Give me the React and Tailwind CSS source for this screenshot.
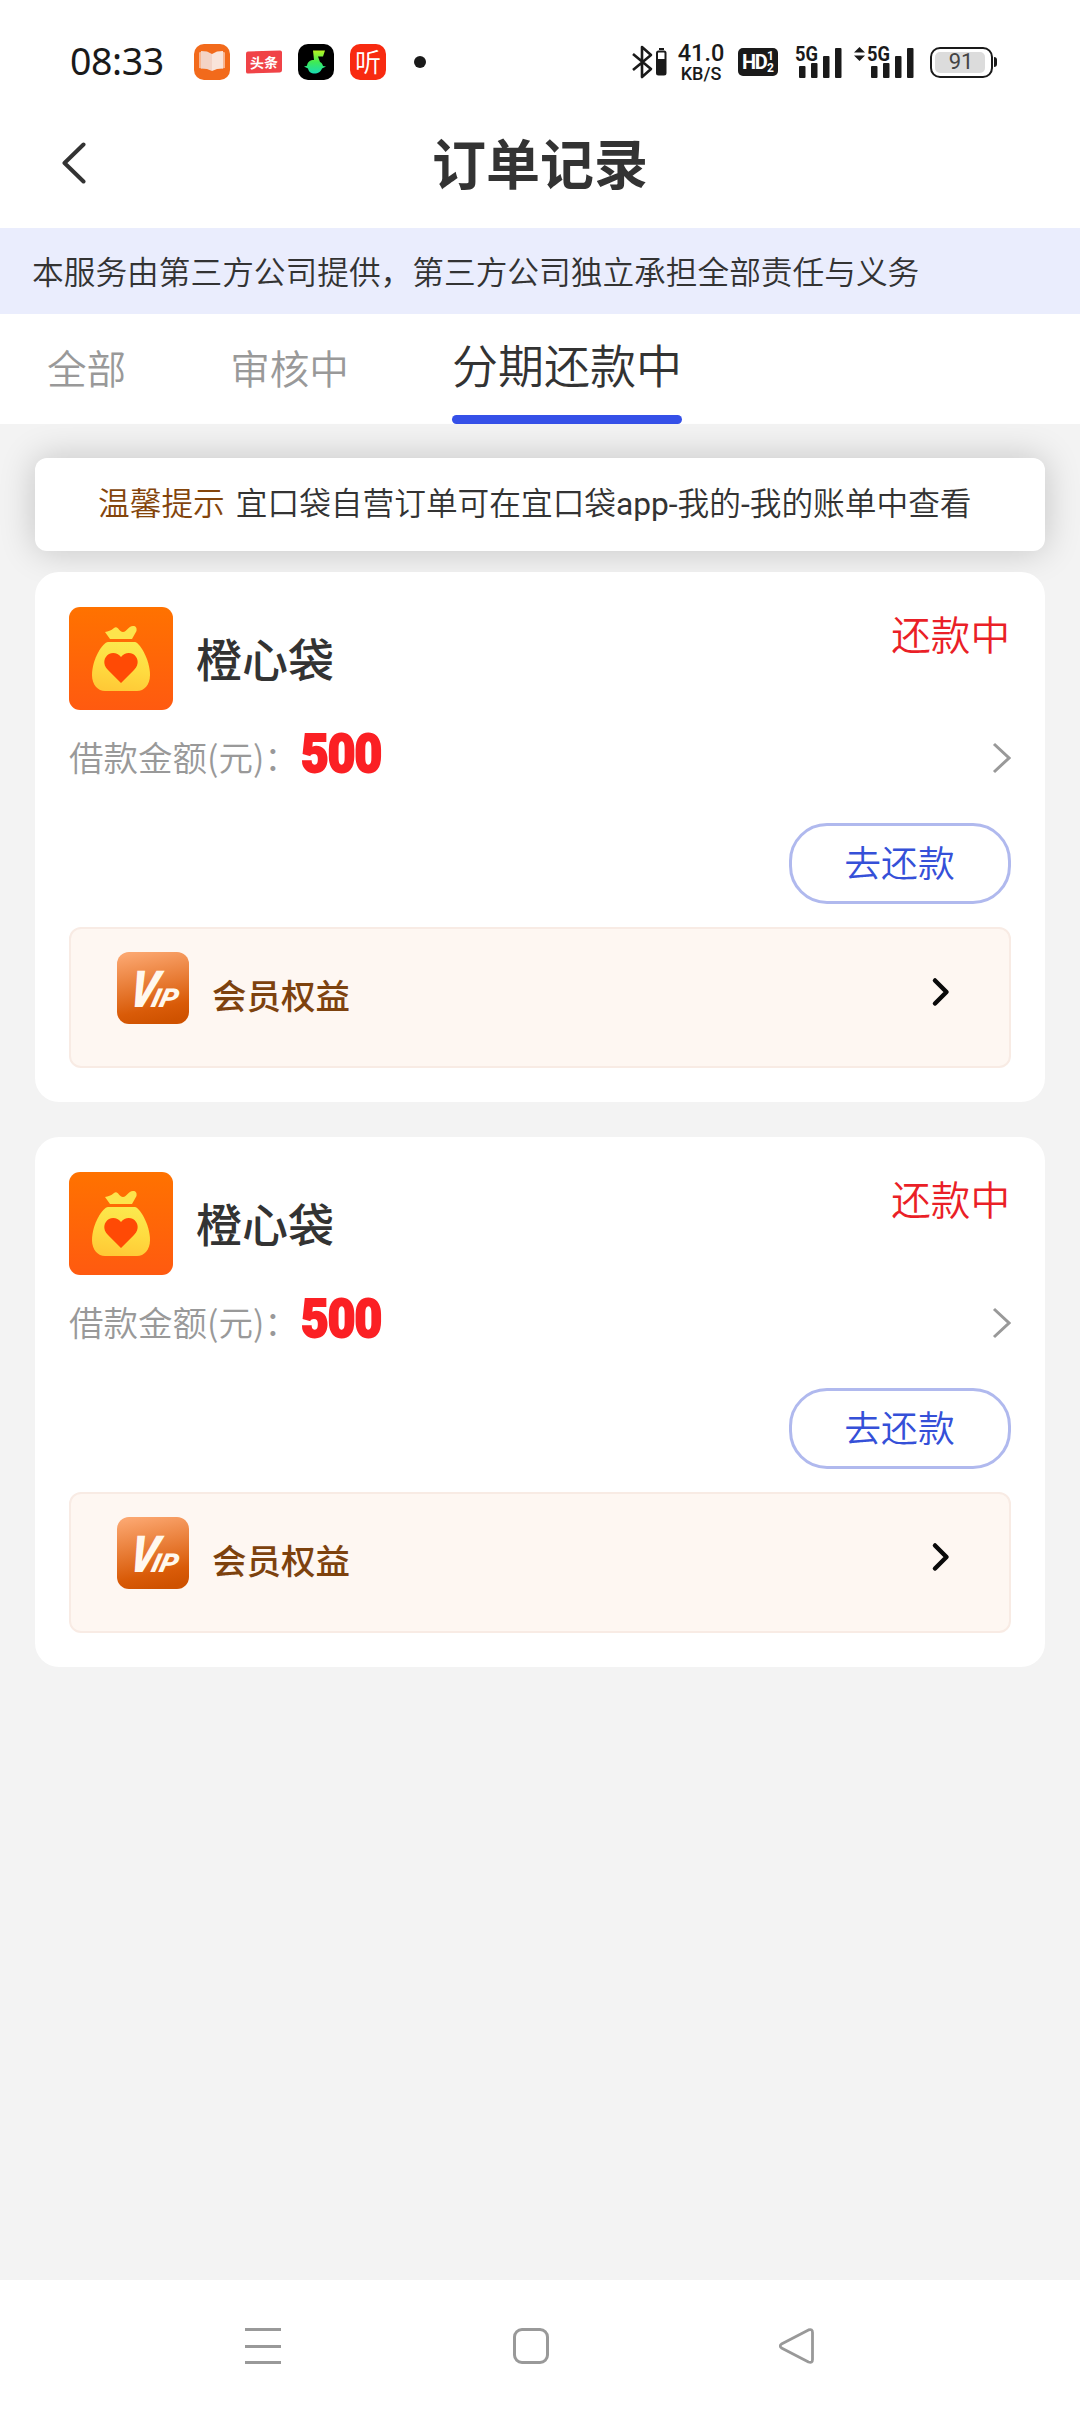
import clsx from 'clsx';

const tabs = [
  { id: 'all', label: '全部' },
  { id: 'review', label: '审核中' },
  { id: 'repaying', label: '分期还款中' },
];

const orders = [
  { id: 1, name: '橙心袋', amount: 500, status: '还款中' },
  { id: 2, name: '橙心袋', amount: 500, status: '还款中' },
];

export default function App() {
  return (
    <div className="flex flex-col w-[1080px] h-[2412px] overflow-hidden bg-[#f3f3f3] text-[#333333] font-['Noto_Sans_CJK_SC',sans-serif] font-[350] whitespace-nowrap">
      <StatusBar />
      <Header title="订单记录" />

      <div className="flex items-center h-[86px] pl-[32px] bg-[#eaedfd] text-[31.7px] leading-none shrink-0">
        本服务由第三方公司提供，第三方公司独立承担全部责任与义务
      </div>

      <Tabs active="repaying" />

      <main className="flex-1 px-[35px] pt-[34px]">
        <div className="flex items-center h-[93px] pl-[63px] mb-[21px] rounded-[12px] bg-white text-[31.7px] leading-none shadow-[0_0_36px_rgba(0,0,0,0.2)] font-['Roboto','Noto_Sans_CJK_SC',sans-serif]">
          <span className="text-[#84450b]">温馨提示</span>
          <span className="ml-[11px]">
            宜口袋自营订单可在宜口袋<span className="font-normal">app-</span>我的<span className="font-normal">-</span>我的账单中查看
          </span>
        </div>

        <div className="relative flex flex-col gap-[35px]">
          {orders.map((order) => (
            <OrderCard key={order.id} order={order} />
          ))}
        </div>
      </main>

      <NavBar />
    </div>
  );
}

function StatusBar() {
  return (
    <div className="flex items-center justify-between h-[124px] pl-[70px] pr-[83px] bg-white text-[#1a1a1a] leading-none shrink-0">
      <div className="flex items-center">
        <span className="w-[124px] pb-[2px] text-[37.500px] font-['Noto_Sans',sans-serif] font-normal tracking-[-0.4px]">08:33</span>
        <div className="flex items-center gap-[16px]">
          {/* Reader */}
          <svg className="w-[36px] h-[36px]" viewBox="0 0 36 36">
            <rect width="36" height="36" rx="10" fill="#f26a1b" />
            <path d="M5 8.500l3-1v17l-3-.5z M31 8.500l-3-1v17l3-.5z" fill="#f8b590" />
            <path d="M7 7l6 .5 5 2.500v17l-5-2-6-.5z" fill="#f3d3c6" />
            <path d="M29 7l-6 .5-5 2.500v17l5-2 6-.5z" fill="#f9e4da" />
          </svg>
          {/* Headlines */}
          <span className="flex items-center justify-center w-[36px] h-[22px] rounded-[2px] bg-[#f04347] text-white text-[14px] font-bold -skew-y-2">
            头条
          </span>
          {/* Music */}
          <svg className="w-[36px] h-[36px]" viewBox="0 0 36 36">
            <defs>
              <linearGradient id="note" x1="0" y1="0" x2="0" y2="1">
                <stop offset="0" stopColor="#b8f420" />
                <stop offset="0.5" stopColor="#3fea55" />
                <stop offset="1" stopColor="#18dcb4" />
              </linearGradient>
            </defs>
            <rect width="36" height="36" rx="10" fill="#000" />
            <path d="M15 6.500h12l-2 6h-5l2 5.500c2 1 2.500 2 3 4l3 .5-4 2c-1 3-4 5-7.500 5s-6-2-6.500-5l-4-2 3-.8c.5-3.700 3-5.700 7-5.700z" fill="url(#note)" />
          </svg>
          {/* Audio books */}
          <span className="flex items-center justify-center w-[36px] h-[36px] pb-[2px] rounded-[10px] bg-[#f82a10] text-white text-[26px]">
            听
          </span>
        </div>
        <span className="w-[12px] h-[12px] ml-[28px] rounded-full bg-[#1a1a1a]" />
      </div>

      <div className="flex items-center font-['Roboto',sans-serif] font-normal">
        <svg className="w-[35px] h-[34px]" viewBox="0 0 35 34" fill="none" stroke="#1a1a1a" strokeWidth="2.6">
          <path d="M1 9l18 15-9 8V2l9 8L1 25" strokeLinejoin="round" />
          <path d="M27 4h5" strokeWidth="2" />
          <rect x="25" y="6.500" width="8.500" height="23" rx="1.500" strokeWidth="2" />
          <path d="M25 14h9v15h-9z" fill="#1a1a1a" stroke="none" />
        </svg>
        <div className="flex flex-col items-center w-[46px] ml-[11px] pt-[2px]">
          <span className="text-[23.500px] leading-[21px] font-medium">41.0</span>
          <span className="text-[18px] leading-[19px] font-medium">KB/S</span>
        </div>
        <div className="flex items-center justify-center w-[40px] h-[28px] ml-[14px] rounded-[5px] bg-[#1a1a1a] text-white font-bold">
          <span className="w-[23px] text-[20px] tracking-[-1.500px]">HD</span>
          <span className="flex flex-col ml-[2px] text-[12px] leading-[12px]">
            <span>1</span>
            <span>2</span>
          </span>
        </div>
        <Signal className="ml-[17px]" />
        <svg className="w-[11px] h-[14px] ml-[12px] mb-[16px]" viewBox="0 0 11 14" fill="#1a1a1a">
          <path d="M5.500 0L11 5.500H0z M5.500 14L0 8.500h11z" />
        </svg>
        <Signal className="ml-[2px]" />
        <div className="flex items-center ml-[16px]">
          <div className="w-[63px] h-[31px] p-[3px] rounded-[10px] border-2 border-[#1a1a1a]">
            <div className="flex items-center justify-center w-[50px] h-full pl-[2px] rounded-[5px] bg-[#dcdcdc] text-[#444444] text-[22px]">
              91
            </div>
          </div>
          <div className="w-[3px] h-[10px] ml-[1px] rounded-r bg-[#1a1a1a]" />
        </div>
      </div>
    </div>
  );
}

function Signal({ className }) {
  return (
    <svg className={clsx('w-[47px] h-[34px] overflow-visible', className)} viewBox="0 0 47 34" fill="#1a1a1a">
      <text x="0" y="16" fontSize="21" fontWeight="700" textLength="23" lengthAdjust="spacingAndGlyphs">5G</text>
      <rect x="4" y="21" width="6.500" height="12" rx="1" />
      <rect x="16" y="18" width="6.500" height="15" rx="1" />
      <rect x="28" y="11" width="6.500" height="22" rx="1" />
      <rect x="40" y="3" width="6.500" height="30" rx="1" />
    </svg>
  );
}

function Header({ title }) {
  return (
    <header className="flex items-center h-[104px] pb-[24px] px-[60px] bg-white shrink-0">
      <div className="flex-1">
        <svg className="w-[28px] h-[44px]" viewBox="0 0 28 44" fill="none" stroke="#333333" strokeWidth="4" strokeLinecap="round" strokeLinejoin="round">
          <path d="M23.500 2.500L4.500 21l19 18.500" />
        </svg>
      </div>
      <h1 className="pb-[5px] text-[54px] leading-none font-bold">{title}</h1>
      <div className="flex-1" />
    </header>
  );
}

function Tabs({ active }) {
  return (
    <nav className="flex h-[110px] pl-[47px] bg-white leading-none shrink-0">
      {tabs.map((tab) => (
        <div
          key={tab.id}
          className={clsx(
            'flex flex-col justify-between items-center',
            tab.id === 'all' && 'mr-[104px]',
            tab.id === 'review' && 'mr-[103px]',
            tab.id === active ? 'pt-[26px] text-[46px] text-[#333333]' : 'pt-[33px] text-[39.600px] text-[#999999]'
          )}
        >
          {tab.label}
          {tab.id === active && <div className="w-full h-[9px] rounded-full bg-[#3550e8]" />}
        </div>
      ))}
    </nav>
  );
}

function OrderCard({ order }) {
  return (
    <section className="h-[530px] px-[34px] pt-[35px] rounded-[24px] bg-white leading-none">
      <div className="flex h-[103px]">
        <BagLogo id={`bag-${order.id}`} />
        <h2 className="mt-[27px] ml-[23px] text-[46px] leading-none font-medium">{order.name}</h2>
        <span className="mt-[6px] mr-[1px] ml-auto text-[39.600px] text-[#ea1f27]">{order.status}</span>
      </div>

      <div className="flex items-center h-[96px]">
        <span className="pb-[3px] text-[34.500px] text-[#999999]">借款金额(元)：</span>
        <span className="ml-[2px] mt-[-7px] text-[53px] font-black tracking-[-1px] text-[#fb2024] [-webkit-text-stroke:2px_#fb2024] font-['Roboto',sans-serif] inline-block origin-left scale-x-[0.9]">
          {order.amount}
        </span>
        <svg className="w-[20px] h-[32px] ml-auto" viewBox="0 0 20 32" fill="none" stroke="#999999" strokeWidth="3">
          <path d="M3 2l15 14L3 30" />
        </svg>
      </div>

      <div className="flex justify-end mt-[17px]">
        <button className="flex items-center justify-center w-[222px] h-[81px] pb-[5px] pr-[1px] rounded-[38px] border-3 border-[#b0b9ee] text-[36.800px] text-[#3550d8]">
          去还款
        </button>
      </div>

      <div className="flex h-[141px] mt-[23px] pl-[46px] pr-[58px] pt-[23px] rounded-[12px] border-2 border-[#f8ebe4] bg-[#fef7f2]">
        <VipIcon id={`vip-${order.id}`} />
        <span className="mt-[25px] ml-[23px] text-[34.500px] font-medium text-[#7d420e]">会员权益</span>
        <svg className="w-[20px] h-[32px] mt-[24px] ml-auto" viewBox="0 0 20 32" fill="none" stroke="#0a0a0a" strokeWidth="4.500" strokeLinecap="round" strokeLinejoin="round">
          <path d="M4 4.500L15.500 16 4 27.500" />
        </svg>
      </div>
    </section>
  );
}

function BagLogo({ id }) {
  return (
    <svg className="w-[104px] h-[103px] shrink-0" viewBox="0 0 104 103">
      <defs>
        <linearGradient id={`${id}-bg`} x1="0" y1="0" x2="0" y2="1">
          <stop offset="0" stopColor="#ff7200" />
          <stop offset="1" stopColor="#ff5a10" />
        </linearGradient>
        <linearGradient id={`${id}-bag`} x1="0.600" y1="0" x2="0.400" y2="1">
          <stop offset="0" stopColor="#fbe94e" />
          <stop offset="0.500" stopColor="#ffdc40" />
          <stop offset="1" stopColor="#ffc936" />
        </linearGradient>
      </defs>
      <rect width="104" height="103" rx="11" fill={`url(#${id}-bg)`} />
      <path d="M36 25c3-1 6-1 9-4 4-3 5 4 9 4s5-6 10-6c3 0 4 2 3.500 5L63 32H41z" fill="#fde44c" />
      <path d="M39 35h27c4 0 15 17 15 33 0 10-6 16-13 16H36c-7 0-13-6-13-16 0-16 11-33 16-33z" fill={`url(#${id}-bag)`} />
      <path d="M52 76L39 63c-6-6-4-13 1-16 4-2 9-1 12 3 3-4 8-5 12-3 5 3 7 10 1 16z" fill="#ff4a05" />
    </svg>
  );
}

function VipIcon({ id }) {
  return (
    <svg className="w-[72px] h-[72px] shrink-0" viewBox="0 0 72 72">
      <defs>
        <linearGradient id={id} x1="0.300" y1="0" x2="0.500" y2="1">
          <stop offset="0" stopColor="#fba66f" />
          <stop offset="0.800" stopColor="#d95b08" />
          <stop offset="1" stopColor="#cf5200" />
        </linearGradient>
      </defs>
      <rect width="72" height="72" rx="12" fill={`url(#${id})`} />
      <g fill="#fff8ee" stroke="#fff8ee" className="font-['Roboto',sans-serif] font-black italic">
        <text transform="translate(10 54.500) skewX(-12)" fontSize="51" strokeWidth="0" textLength="27" lengthAdjust="spacingAndGlyphs">V</text>
        <text transform="translate(33 55) skewX(-14)" fontSize="26" strokeWidth="0" textLength="26" lengthAdjust="spacingAndGlyphs">IP</text>
      </g>
    </svg>
  );
}

function NavBar() {
  return (
    <footer className="flex items-center h-[132px] pl-[245px] bg-white shrink-0">
      <div className="flex flex-col justify-between w-[36px] h-[36px]">
        <div className="h-[3px] bg-[#999999]" />
        <div className="h-[3px] bg-[#999999]" />
        <div className="h-[3px] bg-[#999999]" />
      </div>
      <div className="w-[36px] h-[36px] ml-[232px] rounded-[9px] border-3 border-[#999999]" />
      <svg className="w-[36px] h-[36px] ml-[230px]" viewBox="0 0 36 36" fill="none" stroke="#999999" strokeWidth="2.800" strokeLinejoin="round">
        <path d="M2.500 16L29.500 1.900Q33.500 .5 33.500 4.500V31.500Q33.500 35.500 29.500 34L2.500 20Q0 18 2.500 16z" />
      </svg>
    </footer>
  );
}
